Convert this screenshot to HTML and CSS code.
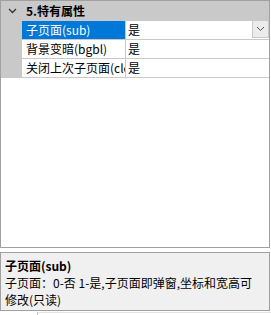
FILE: index.html
```html
<!DOCTYPE html>
<html>
<head>
<meta charset="utf-8">
<link rel="stylesheet" href="styles.css">
</head>
<body>
<div class="grid">
  <div class="cat">
    <span class="chev"><svg width="9" height="6" viewBox="0 0 9 6"><path d="M1 1 L4.5 4.5 L8 1" fill="none" stroke="#333" stroke-width="1.3"/></svg></span>
    <span class="cat-title">5.特有属性</span>
  </div>
  <div class="row sel">
    <div class="gut"></div>
    <div class="name">子页面(sub)</div>
    <div class="val">是<span class="dd"><svg width="9" height="6" viewBox="0 0 9 6"><path d="M1 1 L4.5 4.5 L8 1" fill="none" stroke="#555" stroke-width="1"/></svg></span></div>
  </div>
  <div class="row">
    <div class="gut"></div>
    <div class="name">背景变暗(bgbl)</div>
    <div class="val">是</div>
  </div>
  <div class="row">
    <div class="gut"></div>
    <div class="name">关闭上次子页面(closelast)</div>
    <div class="val">是</div>
  </div>
</div>
<div class="desc">
  <div class="desc-title">子页面(sub)</div>
  <div class="desc-text">子页面：0-否 1-是,子页面即弹窗,坐标和宽高可修改(只读)</div>
</div>
<div class="foot"></div>
</body>
</html>
```
FILE: styles.css
```css
html, body {
  margin: 0;
  padding: 0;
  background: #ffffff;
  font-family: "Noto Sans CJK SC", "Microsoft YaHei", sans-serif;
  font-size: 12px;
  color: #000;
}
.grid {
  width: 268px;
  height: 246px;
  border: 1px solid #a0a0a0;
  background: #fff;
  overflow: hidden;
}
.cat {
  height: 20px;
  background: #c9c9c9;
  display: flex;
  align-items: center;
}
.chev {
  width: 21px;
  display: flex;
  justify-content: center;
  padding-left: 2px;
  box-sizing: border-box;
}
.chev svg { display: block; }
.cat-title {
  font-weight: bold;
  padding-left: 4px;
  line-height: 20px;
}
.row {
  display: flex;
  height: 19px;
}
.gut {
  width: 21px;
  flex: none;
  background: #c9c9c9;
}
.name {
  width: 99px;
  flex: none;
  padding-left: 4px;
  border-right: 1px solid #c9c9c9;
  border-bottom: 1px solid #c9c9c9;
  line-height: 18px;
  white-space: nowrap;
  overflow: hidden;
  text-overflow: clip;
}
.val {
  flex: 1;
  padding-left: 2px;
  border-bottom: 1px solid #c9c9c9;
  line-height: 18px;
  position: relative;
}
.sel .name {
  background: #0078d7;
  color: #fff;
}
.dd {
  position: absolute;
  right: 0;
  top: 0;
  width: 17px;
  height: 17px;
  background: #ececec;
  border: 1px solid #c9c9c9;
  border-top: none;
  box-sizing: border-box;
  display: flex;
  align-items: center;
  justify-content: center;
}
.dd svg { display: block; }
.desc {
  margin-top: 4px;
  border: 1px solid #a0a0a0;
  background: #f0f0f0;
  padding: 4px 10px 0 4px;
  width: 254px;
  height: 53px;
}
.desc-title {
  font-weight: bold;
  line-height: 17px;
}
.desc-text {
  line-height: 17px;
}
.foot {
  margin-left: 37px;
  margin-top: 1px;
  height: 4px;
  border-left: 1px solid #c0c0c0;
  border-top: 1px solid #e3e3e3;
}
```
